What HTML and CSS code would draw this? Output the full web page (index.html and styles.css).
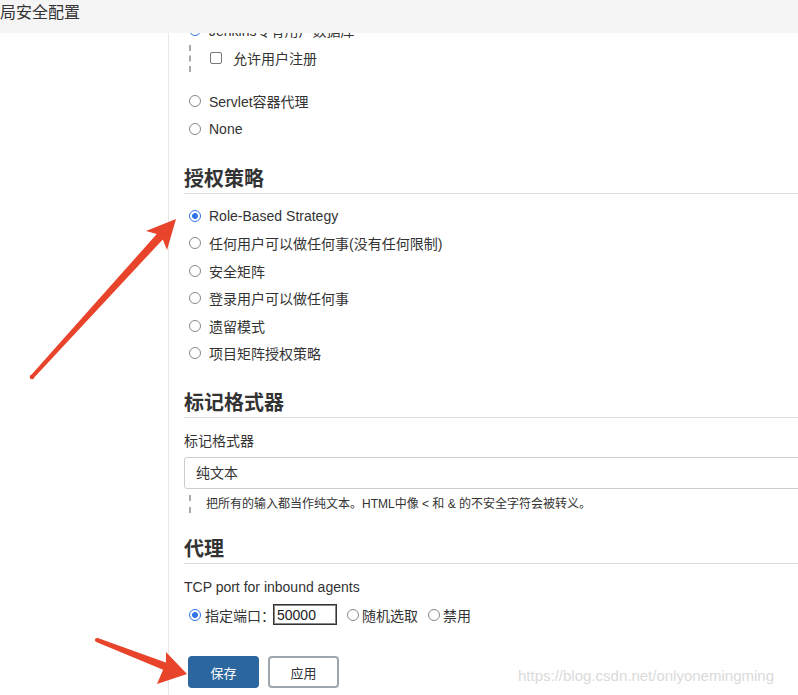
FILE: index.html
```html
<!DOCTYPE html>
<html lang="zh-CN">
<head>
    <meta charset="UTF-8">
    <meta name="viewport" content="width=device-width, initial-scale=1.0">
    <title>全局安全配置</title>
    <link rel="stylesheet" href="styles.css">
</head>
<body>
    <div class="topbar">局安全配置</div>

    <div class="layout">
        <div class="sidebar"></div>

        <div class="main">
            <label class="radio-row"><input type="radio" name="realm" checked><span>Jenkins专有用户数据库</span></label>
            <div class="nested">
                <label class="check-row"><input type="checkbox"><span>允许用户注册</span></label>
            </div>
            <label class="radio-row"><input type="radio" name="realm"><span>Servlet容器代理</span></label>
            <label class="radio-row"><input type="radio" name="realm"><span>None</span></label>

            <div class="section">
                <h2>授权策略</h2>
                <div class="radio-group">
                    <label class="radio-row"><input type="radio" name="auth" checked><span>Role-Based Strategy</span></label>
                    <label class="radio-row"><input type="radio" name="auth"><span>任何用户可以做任何事(没有任何限制)</span></label>
                    <label class="radio-row"><input type="radio" name="auth"><span>安全矩阵</span></label>
                    <label class="radio-row"><input type="radio" name="auth"><span>登录用户可以做任何事</span></label>
                    <label class="radio-row"><input type="radio" name="auth"><span>遗留模式</span></label>
                    <label class="radio-row"><input type="radio" name="auth"><span>项目矩阵授权策略</span></label>
                </div>
            </div>

            <div class="section">
                <h2>标记格式器</h2>
                <div class="field-label">标记格式器</div>
                <div class="select">纯文本</div>
                <div class="help">把所有的输入都当作纯文本。HTML中像 &lt; 和 &amp; 的不安全字符会被转义。</div>
            </div>

            <div class="section">
                <h2>代理</h2>
                <div class="field-label">TCP port for inbound agents</div>
                <div class="port-row">
                    <label class="port-opt"><input type="radio" name="port" checked><span>指定端口：</span></label>
                    <input type="text" class="port-input" value="50000">
                    <label class="port-opt"><input type="radio" name="port"><span>随机选取</span></label>
                    <label class="port-opt"><input type="radio" name="port"><span>禁用</span></label>
                </div>
            </div>

            <div class="buttons">
                <button class="btn btn-primary">保存</button>
                <button class="btn btn-secondary">应用</button>
            </div>
        </div>
    </div>

    <div class="watermark">https://blog.csdn.net/onlyonemingming</div>

    <!-- 标注箭头 -->
    <svg class="arrows" width="798" height="695" viewBox="0 0 798 695">
        <polygon fill="#e8432b" points="176,219 167,250 162.8,239.4 33.5,378.3 30.5,375.7 156.8,234 146,231"/>
        <circle fill="#e8432b" cx="32" cy="377" r="2.3"/>
        <polygon fill="#e8432b" points="187,674 157,684 163.1,669.8 96.3,641.9 97.7,638.1 165.9,662.4 166,652"/>
        <circle fill="#e8432b" cx="97" cy="640" r="2.1"/>
    </svg>
</body>
</html>
```

FILE: styles.css
```css
* {
    margin: 0;
    padding: 0;
    box-sizing: border-box;
}

html, body {
    height: 100%;
    overflow: hidden;
}

body {
    font-family: "Liberation Sans", "Noto Sans CJK SC", sans-serif;
    font-size: 14px;
    color: #333;
    background: #fff;
}

.topbar {
    position: fixed;
    top: 0;
    left: 0;
    right: 0;
    height: 33px;
    background: #f5f5f5;
    font-size: 16px;
    line-height: 26px;
    color: #333;
    z-index: 2;
}

.layout {
    display: flex;
    min-height: 100vh;
}

.sidebar {
    width: 169px;
    flex-shrink: 0;
    border-right: 1px solid #e8e8e8;
}

.main {
    flex: 1;
    padding: 16px 0 0 15px;
    overflow: hidden;
}

input[type="radio"] {
    appearance: none;
    width: 12px;
    height: 12px;
    border: 1px solid #888;
    border-radius: 50%;
    background: #fff;
    flex-shrink: 0;
}

input[type="radio"]:checked {
    border: 1.5px solid #2f74ea;
    background: radial-gradient(circle, #2f74ea 0 2.6px, #fff 3.2px);
}

input[type="checkbox"] {
    appearance: none;
    width: 12px;
    height: 12px;
    border: 1px solid #777;
    border-radius: 2px;
    background: #fff;
    flex-shrink: 0;
}

.radio-row {
    display: flex;
    align-items: center;
    height: 27.5px;
}

.radio-row input {
    margin: 0 8px 0 5px;
}

.nested {
    margin: 1px 0 16px 5px;
    border-left: 2px dashed #aaa;
    padding-left: 19px;
    height: 27px;
}

.check-row {
    display: flex;
    align-items: center;
    height: 27px;
}

.check-row input {
    margin-right: 11px;
}

.section {
    margin-top: 22px;
}

h2 {
    font-size: 20px;
    line-height: 28px;
    font-weight: bold;
    border-bottom: 1px solid #ddd;
}

.radio-group {
    margin-top: 8.5px;
}

.field-label {
    margin-top: 13px;
    line-height: 20px;
}

.select {
    margin-top: 6px;
    width: calc(100% + 40px);
    height: 32px;
    border: 1px solid #ccc;
    border-radius: 3px;
    padding-left: 11px;
    line-height: 30px;
}

.help {
    margin: 6px 0 8px 5px;
    border-left: 2px dashed #aaa;
    padding-left: 15px;
    font-size: 12px;
    line-height: 18px;
}

.port-row {
    display: flex;
    align-items: center;
    height: 23px;
    margin-top: 6px;
}

.port-opt {
    display: flex;
    align-items: center;
    margin-left: 10px;
}

.port-opt:first-child {
    margin-left: 5px;
}

.port-opt input {
    margin-right: 3px;
}

.port-opt:first-child input {
    margin-right: 4px;
}

.port-input {
    width: 64px;
    height: 21px;
    border: 1px solid #333;
    box-shadow: inset 0 0 0 1px #888;
    font-family: inherit;
    font-size: 14px;
    color: #222;
    padding: 0 3px;
    margin-left: -2px;
}

.buttons {
    display: flex;
    margin: 30px 0 0 4px;
}

.btn {
    width: 71px;
    height: 32px;
    border-radius: 4px;
    font-family: inherit;
    font-size: 13px;
}

.btn-primary {
    background: #2b679e;
    color: #fff;
    border: none;
}

.btn-secondary {
    background: #fff;
    color: #333;
    border: 2px solid #9ea6ad;
    margin-left: 9px;
}

.watermark {
    position: absolute;
    left: 518px;
    top: 667px;
    font-size: 15px;
    color: #dadada;
}

.arrows {
    position: fixed;
    top: 0;
    left: 0;
    pointer-events: none;
    z-index: 3;
}
```
